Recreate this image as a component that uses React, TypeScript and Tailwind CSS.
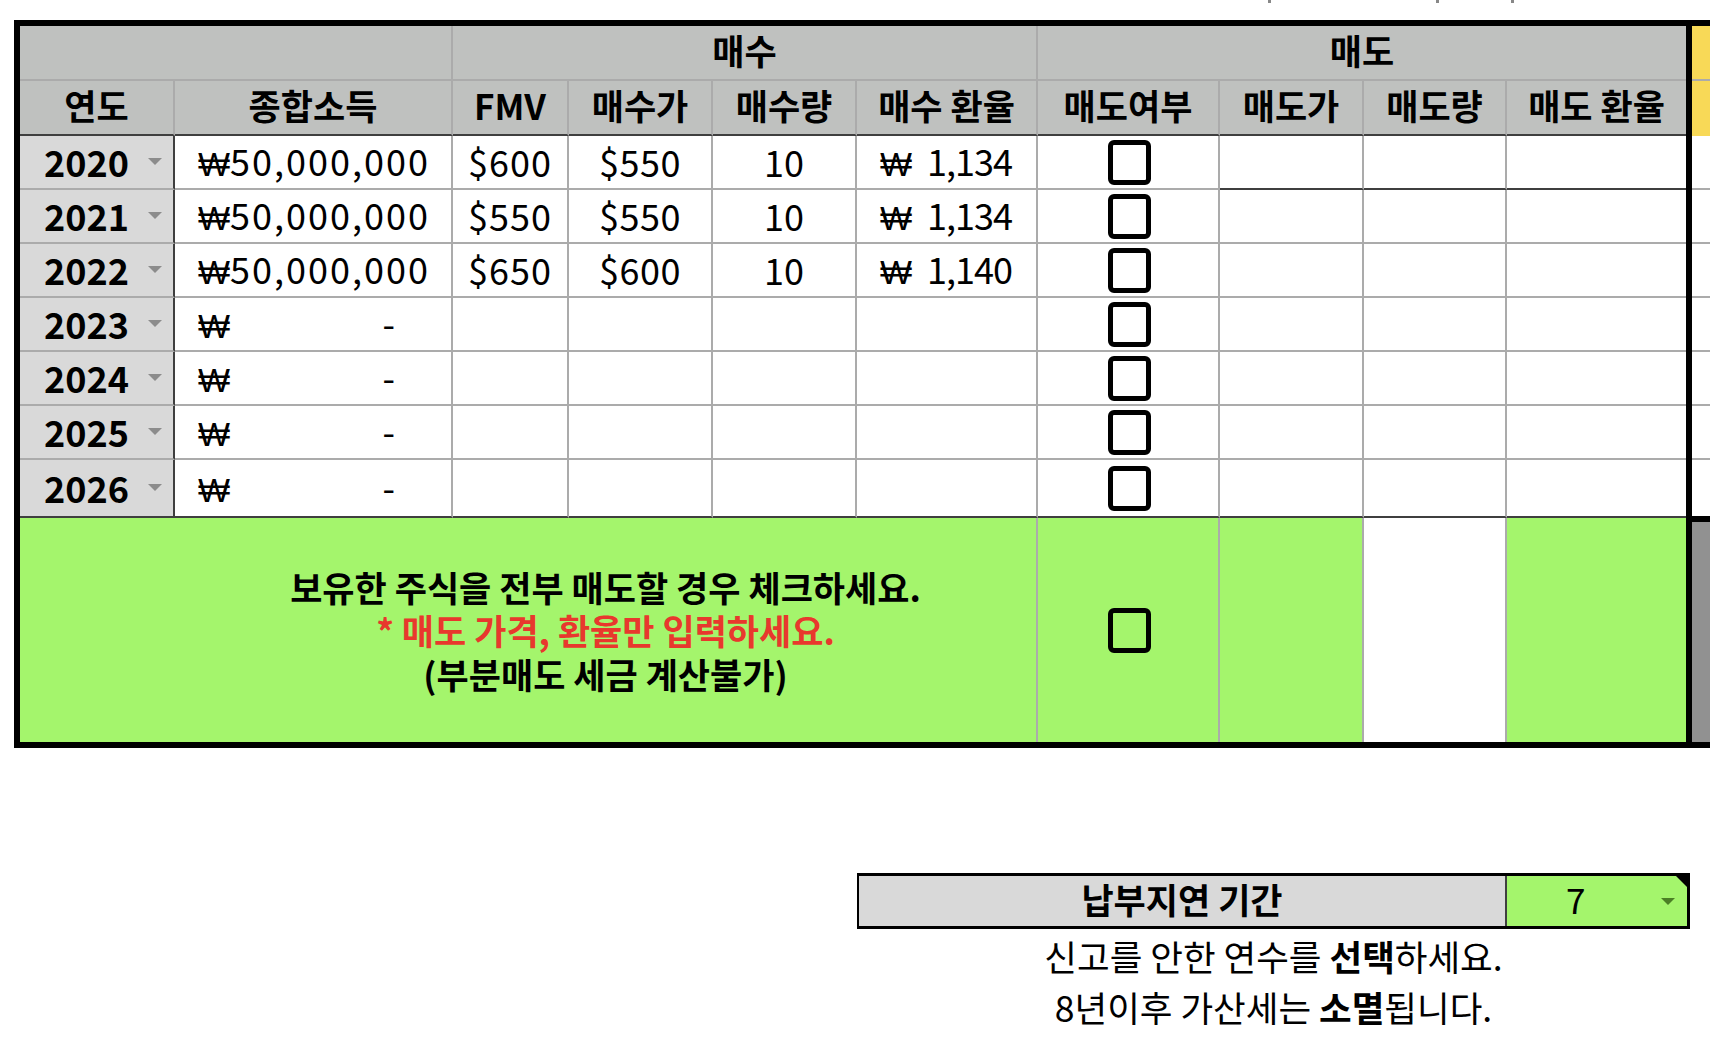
import React from "react";

const years = ["2020", "2021", "2022", "2023", "2024", "2025", "2026"];
const filled = [
  { fmv: "$600", price: "$550", qty: "10", fx: "1,134" },
  { fmv: "$550", price: "$550", qty: "10", fx: "1,134" },
  { fmv: "$650", price: "$600", qty: "10", fx: "1,140" },
];

function Arrow({ color }: { color: string }) {
  return (
    <svg width="14" height="7" viewBox="0 0 14 7" className="shrink-0">
      <polygon points="0,0 14,0 7,7" fill={color} />
    </svg>
  );
}

function CheckBox() {
  return <div className="w-[43px] h-[45px] border-[5px] border-black rounded-[6px]" />;
}

function Won() {
  return <span className="font-['Liberation_Sans','Noto_Sans_CJK_KR',sans-serif] text-[34px] tracking-normal">₩</span>;
}

export default function App() {
  const G = "border-[#ababab]";
  return (
    <div className="w-[1710px] h-[1054px] bg-white text-black font-['Noto_Sans_CJK_KR','Noto_Sans',sans-serif] overflow-hidden">
      {/* clipped glyph tails above */}
      <div className="flex h-[3px]">
        <div className="w-[1268px]" />
        <div className="w-[3px] h-[3px] bg-[#888]" />
        <div className="w-[165px]" />
        <div className="w-[3px] h-[3px] bg-[#888]" />
        <div className="w-[72px]" />
        <div className="w-[3px] h-[3px] bg-[#888]" />
      </div>
      <div className="h-[17px]" />
      <div className="ml-[14px] w-[1696px] border-t-[6px] border-b-[6px] border-l-[6px] border-black flex">
        <div className="grid grid-cols-[155px_278px_116px_144px_144px_181px_182px_144px_143px_179px] grid-rows-[55px_55px_54px_54px_54px_54px_54px_54px_58px_224px]">
          {/* header row 1 */}
          <div className={`col-span-2 bg-[#bfc1bf] border-r-2 border-b-2 ${G}`} />
          <div className={`col-span-4 bg-[#bfc1bf] border-r-2 border-b-2 ${G} flex items-center justify-center pb-[5px] text-[35px] font-bold`}>매수</div>
          <div className={`col-span-4 bg-[#bfc1bf] border-b-2 ${G} flex items-center justify-center pb-[5px] text-[35px] font-bold`}>매도</div>
          {/* header row 2 */}
          {["연도", "종합소득", "FMV", "매수가", "매수량", "매수 환율", "매도여부", "매도가", "매도량", "매도 환율"].map((h, i) => (
            <div
              key={h}
              className={`bg-[#bfc1bf] border-b-2 border-b-[#3f3f3f] ${i < 9 ? "border-r-2 border-r-[#ababab]" : ""} flex items-center justify-center pb-[4px] text-[35px] font-bold whitespace-nowrap`}
            >
              {h}
            </div>
          ))}
          {/* data rows */}
          {years.map((y, r) => {
            const d = filled[r];
            const last = r === 6;
            const bb = last ? "border-b-[#3f3f3f]" : "border-b-[#ababab]";
            const bbSell = last || r === 0 ? "border-b-[#3f3f3f]" : "border-b-[#ababab]";
            return (
              <React.Fragment key={y}>
                <div className={`bg-[#d9d9d9] border-b-2 ${bb} border-r-2 border-r-[#3f3f3f] flex items-center justify-end pb-[2px] text-[36px] font-bold`}>
                  <span className="leading-none">{y}</span>
                  <div className="ml-[19px] mr-[11px]">
                    <Arrow color="#8c8c8c" />
                  </div>
                </div>
                <div className={`border-b-2 ${bb} border-r-2 border-r-[#ababab] flex items-center pl-[23px] ${d ? "pr-[20px]" : "pr-[56px]"} pb-[2px] text-[36px] whitespace-nowrap`}>
                  {d ? (
                    <div className="flex-1 flex items-baseline">
                      <Won />
                      <span className="tracking-[2px]">50,000,000</span>
                    </div>
                  ) : (
                    <div className="flex-1 flex items-baseline justify-between">
                      <Won />
                      <span>-</span>
                    </div>
                  )}
                </div>
                <div className={`border-b-2 ${bb} border-r-2 border-r-[#ababab] flex items-center justify-center pb-[2px] text-[36px] tracking-[1px]`}>{d?.fmv}</div>
                <div className={`border-b-2 ${bb} border-r-2 border-r-[#ababab] flex items-center justify-center pb-[2px] text-[36px] tracking-[0.5px]`}>{d?.price}</div>
                <div className={`border-b-2 ${bb} border-r-2 border-r-[#ababab] flex items-center justify-center pb-[2px] text-[36px]`}>{d?.qty}</div>
                <div className={`border-b-2 ${bb} border-r-2 border-r-[#ababab] flex items-center pl-[23px] pr-[24px] pb-[2px] text-[36px]`}>
                  {d ? (
                    <div className="flex-1 flex items-baseline justify-between">
                      <Won />
                      <span className="tracking-[-1px]">{d.fx}</span>
                    </div>
                  ) : null}
                </div>
                <div className={`border-b-2 ${bb} border-r-2 border-r-[#ababab] flex items-center justify-center pl-[2px]`}>
                  <CheckBox />
                </div>
                <div className={`border-b-2 ${bbSell} border-r-2 border-r-[#ababab]`} />
                <div className={`border-b-2 ${bbSell} border-r-2 border-r-[#ababab]`} />
                <div className={`border-b-2 ${bbSell}`} />
              </React.Fragment>
            );
          })}
          {/* green row */}
          <div className="col-span-6 bg-[#a4f56c] border-r-2 border-r-[#ababab] flex flex-col items-center justify-center pl-[155px] text-[35px] font-bold leading-[43.5px] whitespace-nowrap">
            <div>보유한 주식을 전부 매도할 경우 체크하세요.</div>
            <div className="text-[#e8382d]">* 매도 가격, 환율만 입력하세요.</div>
            <div>(부분매도 세금 계산불가)</div>
          </div>
          <div className="bg-[#a4f56c] border-r-2 border-r-[#ababab] flex items-center justify-center pl-[2px]">
            <CheckBox />
          </div>
          <div className="bg-[#a4f56c] border-r-2 border-r-[#ababab]" />
          <div className="bg-white border-r-2 border-r-[#ababab]" />
          <div className="bg-[#a4f56c]" />
        </div>
        <div className="w-[6px] bg-black shrink-0" />
        <div className="w-[18px] shrink-0 flex flex-col">
          <div className="h-[55px] bg-[#f8d957] border-b-2 border-[#ababab]" />
          <div className="h-[55px] bg-[#f8d957]" />
          {[0, 1, 2, 3, 4, 5].map((i) => (
            <div key={i} className="h-[54px] bg-white border-b-2 border-[#ababab]" />
          ))}
          <div className="h-[56px] bg-white" />
          <div className="h-[6px] bg-black" />
          <div className="h-[220px] bg-[#919191]" />
        </div>
      </div>
      {/* bottom box */}
      <div className="mt-[125px] ml-[857px] w-[833px]">
        <div className="h-[56px] flex border-t-[3px] border-b-[3px] border-r-[3px] border-l-2 border-black">
          <div className="w-[648px] bg-[#d9d9d9] border-r-2 border-r-[#404040] flex items-center justify-center pb-[3px] text-[35px] font-bold">
            납부지연 기간
          </div>
          <div className="flex-1 bg-[#a4f56c] flex items-center relative">
            <span className="ml-[59px] pb-[3px] text-[35px]">7</span>
            <div className="ml-auto mr-[12px]">
              <Arrow color="#4b7f25" />
            </div>
            <div className="absolute top-0 right-0 w-0 h-0 border-l-[11px] border-l-transparent border-t-[11px] border-t-black" />
          </div>
        </div>
        <div className="text-center text-[35.5px] leading-[51px] pt-[1px]">
          <div>
            신고를 안한 연수를 <b>선택</b>하세요.
          </div>
          <div>
            8년이후 가산세는 <b>소멸</b>됩니다.
          </div>
        </div>
      </div>
    </div>
  );
}
